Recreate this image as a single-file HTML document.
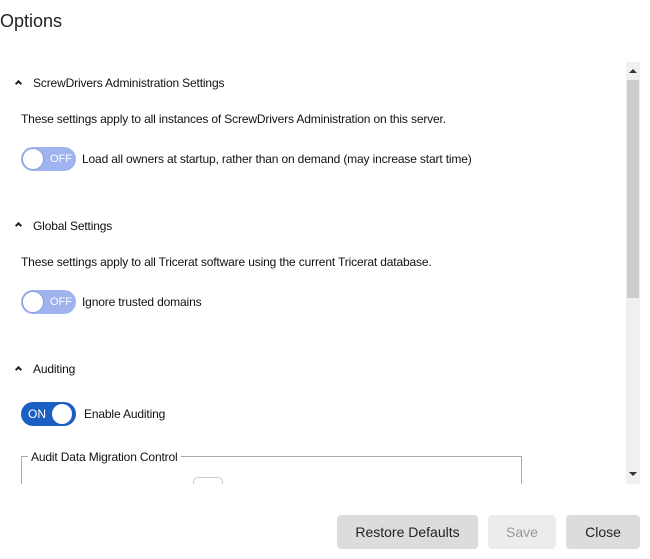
<!DOCTYPE html>
<html><head><meta charset="utf-8"><style>
*{margin:0;padding:0;box-sizing:border-box}
body{width:650px;height:559px;background:#fff;font-family:"Liberation Sans",sans-serif;color:#111;position:relative;overflow:hidden;font-size:12px}
.a{position:absolute;white-space:nowrap;letter-spacing:-0.15px}
.title{left:0;top:11px;font-size:18px;color:#222;letter-spacing:0}
.h{font-size:12px}
.car{position:absolute;width:5px;height:5px;border-left:2px solid #222;border-top:2px solid #222;transform:rotate(45deg)}
.tg{position:absolute;width:55px;height:24px;border-radius:12px}
.off{background:#9fb3ee}
.on{background:#1b5fc4}
.knob{position:absolute;top:1px;width:22px;height:22px;border-radius:11px;background:#fff;border:1px solid #1b5fc4}
.tg span{position:absolute;top:6px;font-size:11px;color:#fff}
.btn{position:absolute;top:515px;height:34px;border-radius:4px;background:#dcdcdc;font-size:14px;text-align:center;line-height:34px;color:#222}
</style></head><body>
<div class="a title">Options</div>

<div class="car" style="left:16px;top:81px"></div>
<div class="a h" style="left:33px;top:76px">ScrewDrivers Administration Settings</div>
<div class="a" style="left:21px;top:112px">These settings apply to all instances of ScrewDrivers Administration on this server.</div>
<div class="tg off" style="left:21px;top:147px"><div class="knob" style="left:1px;border-color:#8aa0e0"></div><span style="left:29px">OFF</span></div>
<div class="a" style="left:82px;top:152px">Load all owners at startup, rather than on demand (may increase start time)</div>

<div class="car" style="left:16px;top:223px"></div>
<div class="a h" style="left:33px;top:219px">Global Settings</div>
<div class="a" style="left:21px;top:255px">These settings apply to all Tricerat software using the current Tricerat database.</div>
<div class="tg off" style="left:21px;top:290px"><div class="knob" style="left:1px;border-color:#8aa0e0"></div><span style="left:29px">OFF</span></div>
<div class="a" style="left:82px;top:295px">Ignore trusted domains</div>

<div class="car" style="left:16px;top:367px"></div>
<div class="a h" style="left:33px;top:362px">Auditing</div>
<div class="tg on" style="left:21px;top:402px"><div class="knob" style="left:30px"></div><span style="left:7px;font-size:12px;top:5px">ON</span></div>
<div class="a" style="left:84px;top:407px">Enable Auditing</div>

<div style="position:absolute;left:21px;top:456px;width:501px;height:40px;border:1px solid #aaa;border-bottom:none"></div>
<div class="a" style="left:28px;top:450px;background:#fff;padding:0 3px">Audit Data Migration Control</div>
<div style="position:absolute;left:193px;top:477px;width:30px;height:20px;border:1px solid #ccc;border-radius:5px"></div>
<div style="position:absolute;left:0;top:484px;width:650px;height:75px;background:#fff"></div>

<div style="position:absolute;left:626px;top:62px;width:14px;height:422px;background:#f0f0f0"></div>
<div style="position:absolute;left:627px;top:80px;width:12px;height:218px;background:#cdcdcd"></div>
<div style="position:absolute;left:629px;top:69px;width:0;height:0;border-left:4px solid transparent;border-right:4px solid transparent;border-bottom:4px solid #333"></div>
<div style="position:absolute;left:629px;top:472px;width:0;height:0;border-left:4px solid transparent;border-right:4px solid transparent;border-top:4px solid #333"></div>

<div class="btn" style="left:337px;width:141px">Restore Defaults</div>
<div class="btn" style="left:488px;width:68px;background:#ececec;color:#999">Save</div>
<div class="btn" style="left:566px;width:74px">Close</div>
</body></html>
